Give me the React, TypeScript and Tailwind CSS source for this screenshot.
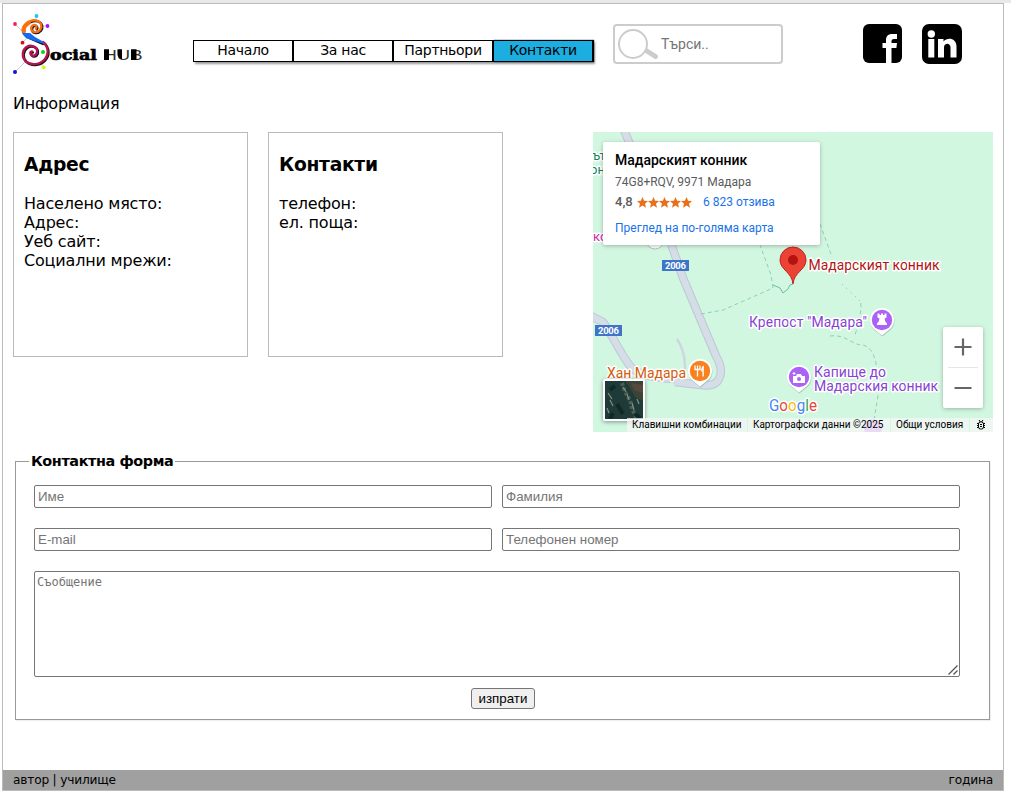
import React from "react";

const uiFont = "font-['DejaVu_Sans',sans-serif]";

function Logo() {
  return (
    <svg className="block h-[64px] w-[136px]" viewBox="10 12 136 64" role="img" aria-label="Social HUB">
      <g stroke="#b5b5b5" strokeWidth="0.7">
        <path d="M15 24l7 7M36 16v5M47 26h-7M23 42l5-5M15 72l12-12M44 67l-4-5" />
      </g>
      <g fill="none" strokeLinecap="round">
        <g stroke="#1d1420" strokeWidth="2.400" transform="translate(.9 .9)">
          <path d="M36 28.500c1.500-2-.5-4-2.500-3.500c-3 1-3.500 6.500 1 7.200c5 .3 7.500-4 6.800-7.200c-1.300-5-7-5.500-11-4c-5 2-8.500 6.500-7.500 11" />
          <path d="M43 42c6 5 6 13 1 18c-5 5-14 5.500-18.500 1c-4-4-3.500-11 1-14c4-2.500 9.500-1 10.500 3c.8 4-2.500 6.500-5 5.500c-2.500-1-2-4 0-4" />
          <path d="M26 36l16 7" />
        </g>
        <path d="M36 28.500c1.500-2-.5-4-2.500-3.500c-3 1-3.500 6.500 1 7.200c5 .3 7.500-4 6.800-7.200c-1.300-5-7-5.500-11-4c-5 2-8.500 6.500-7.500 11" stroke="#fb6f0d" strokeWidth="2.300" />
        <path d="M29 22.500c-4 2.500-6 6-5 9" stroke="#fb6f0d" strokeWidth="4" />
        <path d="M43 42c6 5 6 13 1 18c-5 5-14 5.500-18.500 1c-4-4-3.500-11 1-14c4-2.500 9.500-1 10.500 3c.8 4-2.500 6.500-5 5.500c-2.500-1-2-4 0-4" stroke="#b5144f" strokeWidth="2.300" />
      </g>
      <path d="M22 33h8l5 4l8 4.500l1.500 2.500L30 39.500q-6-2-8-6.500z" fill="#126bf5" />
      <circle cx="15" cy="24" r="1.900" fill="#f51b67" />
      <circle cx="36.500" cy="16" r="1.900" fill="#18c8f7" />
      <circle cx="47.500" cy="26" r="1.900" fill="#b70cf1" />
      <circle cx="22.500" cy="42.700" r="1.900" fill="#d90d17" />
      <circle cx="43" cy="52" r="2" fill="#08d511" />
      <circle cx="43.700" cy="67.300" r="1.900" fill="#c9fb08" />
      <circle cx="15" cy="72" r="2" fill="#1a0ed8" />
      <text x="50" y="60" textLength="47" lengthAdjust="spacingAndGlyphs" fontFamily="DejaVu Serif" fontWeight="700" fontSize="14" stroke="#000" strokeWidth=".6">ocial</text>
      <text x="103.500" y="60" textLength="39" lengthAdjust="spacingAndGlyphs" fontFamily="Liberation Sans" fontSize="15" fill="#333">HUB</text>
      <path d="M104 49.300h5V60h-5zM117.500 49.300h4.500V59.500l-3-1.500l-1.500-3zM131 49.300h5.500V60H131z" />
    </svg>
  );
}

const links = ["Начало", "За нас", "Партньори", "Контакти"];

function Header() {
  return (
    <header className="flex h-[80px] items-start">
      <div className="ml-[7px] mt-[8px] w-[136px]"><Logo /></div>
      <nav className="ml-[47px] mt-[36px] flex h-[22px] shadow-[2px_2px_2px_#999]">
        {links.map((label) => (
          <a key={label} className={`block h-[22px] w-[100px] border border-black text-center text-[14px] leading-[18px] tracking-[-0.300px] ${label === "Контакти" ? "bg-[#1caee0] shadow-[1px_0_1px_#000]" : "bg-white"}`}>{label}</a>
        ))}
      </nav>
      <div className="ml-[20px] mt-[20px] flex h-[40px] w-[170px] items-center rounded-[4px] border-2 border-[#ccc]">
        <svg className="h-[36px] w-[44px] shrink-0" viewBox="0 0 44 36">
          <path d="M31 24.500l9.500 6" stroke="#ccc" strokeWidth="5" strokeLinecap="round" />
          <circle cx="18" cy="18" r="14" fill="#fff" stroke="#ccc" strokeWidth="2" />
        </svg>
        <input className="ml-[2px] w-[110px] p-0 font-['Roboto',sans-serif] text-[14px] outline-none placeholder:text-[#757575]" placeholder="Търси.." />
      </div>
      <svg className="ml-[80px] mt-[20px] h-[40px] w-[40px]" viewBox="0 0 40 40">
        <rect width="39" height="39" rx="6" />
        <path d="M23 39V24h-3.500v-5H23v-3c0-4 2.500-6 6-6h5v5h-3c-2 0-2.500 1-2.500 2.500V19H34l-.6 5h-4.900v15z" fill="#fff" />
      </svg>
      <svg className="ml-[19px] mt-[20px] h-[40px] w-[40px]" viewBox="0 0 40 40">
        <rect width="40" height="40" rx="7" />
        <circle cx="9.300" cy="10" r="3.700" fill="#fff" />
        <path d="M6.300 15h6v18.500h-6zM16 15h5.500v2.500c4-5 13-3.500 13 5v11h-6v-10c0-5-6.500-5-6.500 0v10h-6z" fill="#fff" />
      </svg>
    </header>
  );
}

function InfoCard({ title, rows }: { title: string; rows: string[] }) {
  return (
    <section className="h-[225px] w-[235px] border border-[#bbb] px-[10px] pt-[20px]">
      <h2 className="text-[18.700px] leading-[23px] font-bold tracking-[-0.300px]">{title}</h2>
      <div className="mt-[18px] text-[16px] leading-[19px] tracking-[-0.180px]">
        {rows.map((row) => <p key={row}>{row}</p>)}
      </div>
    </section>
  );
}

function Pin({ x, y, color, children }: { x: number; y: number; color: string; children: React.ReactNode }) {
  return (
    <g transform={`translate(${x} ${y})`}>
      <path d="M0 15.500L-8.500 8.500A12 12 0 1 1 8.500 8.500z" fill="#8cb5a5" opacity=".7" transform="translate(.4 1)" />
      <path d="M0 15.500L-8.500 8.500A12 12 0 1 1 8.500 8.500z" fill="#fff" />
      <circle r="10.200" fill={color} />
      {children}
    </g>
  );
}

function MapDrawing() {
  const halo = { stroke: "#fff", strokeWidth: 3, strokeLinejoin: "round" as const, paintOrder: "stroke" };
  const roads = "M31-2l44 105l15 43l33 78q8 14 3 23q-4 8-18 6l-26-3M-2 184l12 6c9 12 20 37 29 46c8 8 25 10 43 11";
  return (
    <svg className="block h-[300px] w-[400px]" viewBox="0 0 400 300" fontFamily="Roboto, sans-serif">
      <rect width="400" height="300" fill="#d2f7e1" />
      <g fill="none" strokeLinejoin="round">
        <path d={roads} stroke="#bdc7d6" strokeWidth="8.500" />
        <path d={roads} stroke="#d5dee7" strokeWidth="6.500" />
        <path d="M84 207q8 12 8 28v12" stroke="#ced5e3" strokeWidth="2.500" />
        <g stroke="#8fcfb5" strokeDasharray="4 3">
          <path d="M108 182l22-4l50-22l-2-13l-12-33M227 92l12 33M268 171c0 15-3 22-6 32M237 204c16-2 22 9 32 9c10 1 14 14 15 25l3 14l-6 36" />
        </g>
        <path d="M249 152l18 17" stroke="#70bba4" strokeDasharray="1 5" />
        <path d="M180 153l7 3l3 5l5-4l2-4l3-1" stroke="#70bba4" />
      </g>
      <g fontSize="13" fill="#138761" {...halo}>
        <text x="-1" y="28">ът</text><text x="-3" y="42">он</text>
        <text x="0" y="109" fill="#d326a7">ко</text>
      </g>
      <circle cx="62" cy="108" r="9" fill="#fff" stroke="#aacabd" />
      <g fontSize="9.500" fontWeight="700" fill="#fff">
        <rect x="69" y="128" width="27" height="11" fill="#3e75c8" /><text x="72" y="137" textLength="21">2006</text>
        <rect x="2" y="193" width="27" height="11" fill="#3e75c8" /><text x="5" y="201.500" textLength="21">2006</text>
      </g>
      <path d="M200 152c-1-12-13-14-13-24a13 13 0 0 1 26 0c0 10-12 12-13 24z" fill="#ea4335" stroke="#c5221f" />
      <circle cx="200" cy="128" r="5" fill="#b31412" />
      <g fontSize="14" {...halo}>
        <text x="215.500" y="138" fill="#b31412" textLength="131">Мадарският конник</text>
        <text x="156" y="195" fill="#8742d5" textLength="118">Крепост "Мадара"</text>
        <text x="14" y="246" fill="#d35b0a" textLength="79">Хан Мадара</text>
        <text x="221" y="245" fill="#8742d5" textLength="72">Капище до</text>
        <text x="221" y="259" fill="#8742d5" textLength="124">Мадарския конник</text>
      </g>
      <Pin x={289} y={188} color="#ab63f7"><path d="M-4.500-6.500h2v1.500h1.500v-1.500h2v1.500h1.500v-1.500h2v4l-2 1l.8 3l1.700 2v1.500h-10V3.500l1.700-2l.8-3l-2-1z" fill="#fff" /></Pin>
      <Pin x={206} y={245} color="#ab63f7"><path d="M-6-1h3l1-2h4l1 2h3v7H-6z" fill="#fff" /><circle cy="2" r="2" fill="#ab63f7" /><path d="M-5-5v3M-6.500-3.500h3" stroke="#fff" /></Pin>
      <Pin x={107} y={239} color="#fa811f"><path d="M-5-5.500v4h5v-4M-2.500-5.500V5.500" fill="none" stroke="#fff" strokeWidth="1.300" /><path d="M3.800 5.500H2.500V.5H1.200C1-3 2-5 3.800-5.500z" fill="#fff" /></Pin>
      <circle cx="280" cy="296" r="9" fill="#c38af5" />
      <g fontFamily="Roboto" fontSize="16.500" {...halo}>
        <text x="176" y="279" textLength="48" lengthAdjust="spacingAndGlyphs">
          <tspan fill="#4285f4">G</tspan><tspan fill="#ea4335">o</tspan><tspan fill="#fbbc04">o</tspan><tspan fill="#4285f4">g</tspan><tspan fill="#34a853">l</tspan><tspan fill="#ea4335">e</tspan>
        </text>
      </g>
    </svg>
  );
}

function Satellite() {
  return (
    <svg className="h-[42px] w-[42px] rounded-[2px] border-2 border-white shadow-[0_1px_4px_#0006]" viewBox="0 0 38 38">
      <rect width="38" height="38" fill="#1e3b39" />
      <path d="M20 0h18v20l-8-4l-5-9z" fill="#3c4337" /><path d="M26 2l12 2v8l-9-3z" fill="#55493d" />
      <path d="M17 2l3 9l5 8l2 9l5 10" fill="none" stroke="#4d5d52" strokeWidth="4" strokeDasharray="3 2" />
      <path d="M3 12l4 6M5 19l3 6M2 27l2 5M18 6l3 5M22 13l2 6M27 22l2 7M32 18l2 5" stroke="#83907f" strokeWidth="1.200" />
      <path d="M10 5l-5 4M12 23l6 10M8 32l-3 6M30 33l5 4" stroke="#102924" strokeWidth="4" />
    </svg>
  );
}

function MapPanel() {
  return (
    <div className="relative h-[300px] w-[400px] overflow-hidden font-['Roboto',sans-serif]">
      <MapDrawing />
      <div className="absolute top-[10px] left-[10px] h-[103px] w-[217px] rounded-[2px] bg-white px-[12px] pt-[9px] shadow-[0_1px_4px_#0004]">
        <div className="text-[14px] leading-[18px] font-medium whitespace-nowrap text-black">Мадарският конник</div>
        <div className="mt-[5px] text-[12px] leading-[16px] whitespace-nowrap text-[#5b5b5b]">74G8+RQV, 9971 Мадара</div>
        <div className="mt-[4px] flex items-center leading-[16px]">
          <span className="w-[18px] text-[13px] font-medium text-[#5b5b5b]">4,8</span>
          <svg className="ml-[4px] h-[11px] w-[55px]" viewBox="0 0 55 11" fill="#e7711b">
            {[0, 11, 22, 33, 44].map((x) => <path key={x} transform={`translate(${x} 0)`} d="M5.500 0L7.100 3.700L11 4L8 6.700L9 10.800L5.500 8.600L2 10.800L3 6.700L0 4L3.900 3.700z" />)}
          </svg>
          <span className="ml-[11px] text-[12px] text-[#1a73e8]">6 823 отзива</span>
        </div>
        <div className="mt-[10px] text-[12px] leading-[16px] whitespace-nowrap text-[#1a73e8]">Преглед на по-голяма карта</div>
      </div>
      <div className="absolute right-[10px] bottom-[24px] flex h-[81px] w-[40px] flex-col items-center rounded-[2px] bg-white shadow-[0_1px_4px_#0004]">
        <svg className="h-[81px] w-[40px]" viewBox="0 0 40 81" stroke="#666"><path d="M11.500 20h17M20 11.500v17M11.500 61h17" strokeWidth="2.200" /><path d="M5 40.500h30" stroke="#e6e6e6" /></svg>
      </div>
      <div className="absolute bottom-[11px] left-[10px]"><Satellite /></div>
      <div className="absolute right-0 bottom-0 flex h-[14px] gap-px text-[10px] leading-[14px] whitespace-nowrap text-black">
        <span className="w-[120px] bg-[#f5f5f5]/75 pl-[5px]">Клавишни комбинации</span>
        <span className="w-[142px] bg-[#f5f5f5]/75 pl-[5px]">Картографски данни ©2025</span>
        <span className="w-[78px] bg-[#f5f5f5]/75 pl-[5px]">Общи условия</span>
        <span className="flex w-[23px] items-center justify-center bg-[#f5f5f5]/75">
          <svg className="mr-[2px] h-[10px] w-[10px]" viewBox="0 0 10 10" fill="none" stroke="#000"><rect x="2.500" y="2" width="5" height="7" rx="2" /><path d="M3 0l1.500 2M7 0L5.500 2M1 3.500h1.500M1 5.500h1.500M1 7.500h1.500M7.500 3.500H9M7.500 5.500H9M7.500 7.500H9M4 4.500h2M4 6.500h2" /></svg>
        </span>
      </div>
    </div>
  );
}

const field = "h-[23px] w-[458px] rounded-[2px] border border-[#767676] bg-white px-[3px] py-0 font-['Liberation_Sans',sans-serif] text-[13.333px] outline-none placeholder:text-[#757575]";

function ContactForm() {
  return (
    <fieldset className="mt-[21px] ml-[12px] h-[267px] w-[975px] border border-[#999] px-[18px] shadow-[1px_1px_0_#eee]">
      <legend className="ml-[-5px] px-[2px] text-[14.400px] leading-[17px] font-bold tracking-[-0.400px]">Контактна форма</legend>
      <div className="mt-[15px] grid w-[926px] grid-cols-2 gap-x-[10px] gap-y-[20px]">
        <input className={field} placeholder="Име" />
        <input className={field} placeholder="Фамилия" />
        <input className={field} placeholder="E-mail" />
        <input className={field} placeholder="Телефонен номер" />
      </div>
      <div className="relative mt-[20px] h-[106px] w-[926px]">
        <textarea className="block h-[106px] w-[926px] resize-none rounded-[2px] border border-[#767676] p-[2px] font-['DejaVu_Sans_Mono',monospace] text-[12px] leading-[16px] outline-none placeholder:text-[#757575]" placeholder="Съобщение" />
        <svg className="absolute right-[2px] bottom-[2px] h-[10px] w-[10px]" viewBox="0 0 10 10" stroke="#555" strokeWidth="1.300"><path d="M.5 9.500l9-9M5.500 9.500l4-4" /></svg>
      </div>
      <button type="button" className="mt-[11px] ml-[437px] block h-[21px] w-[64px] rounded-[3px] border border-[#767676] bg-[#efefef] font-['Liberation_Sans',sans-serif] text-[13.333px] leading-[18px]">изпрати</button>
    </fieldset>
  );
}

export default function App() {
  return (
    <div className={`h-[794px] w-[1011px] overflow-hidden bg-white text-black ${uiFont}`}>
      <div className="h-[3px] bg-[#e8e8e8]" />
      <div className="ml-[2px] flex h-[788px] w-[1002px] flex-col border border-[#bbb]">
        <Header />
        <h1 className="ml-[10px] mt-[10px] text-[16px] leading-[20px] tracking-[-0.250px]">Информация</h1>
        <main className="ml-[10px] mt-[18px] flex h-[300px]">
          <InfoCard title="Адрес" rows={["Населено място:", "Адрес:", "Уеб сайт:", "Социални мрежи:"]} />
          <div className="ml-[20px]"><InfoCard title="Контакти" rows={["телефон:", "ел. поща:"]} /></div>
          <div className="ml-[90px]"><MapPanel /></div>
        </main>
        <ContactForm />
        <footer className="mt-auto flex h-[20px] items-center justify-between bg-[#a0a0a0] px-[10px] text-[12.200px] leading-[20px] tracking-[-0.200px]">
          <span>автор | училище</span><span>година</span>
        </footer>
      </div>
    </div>
  );
}
